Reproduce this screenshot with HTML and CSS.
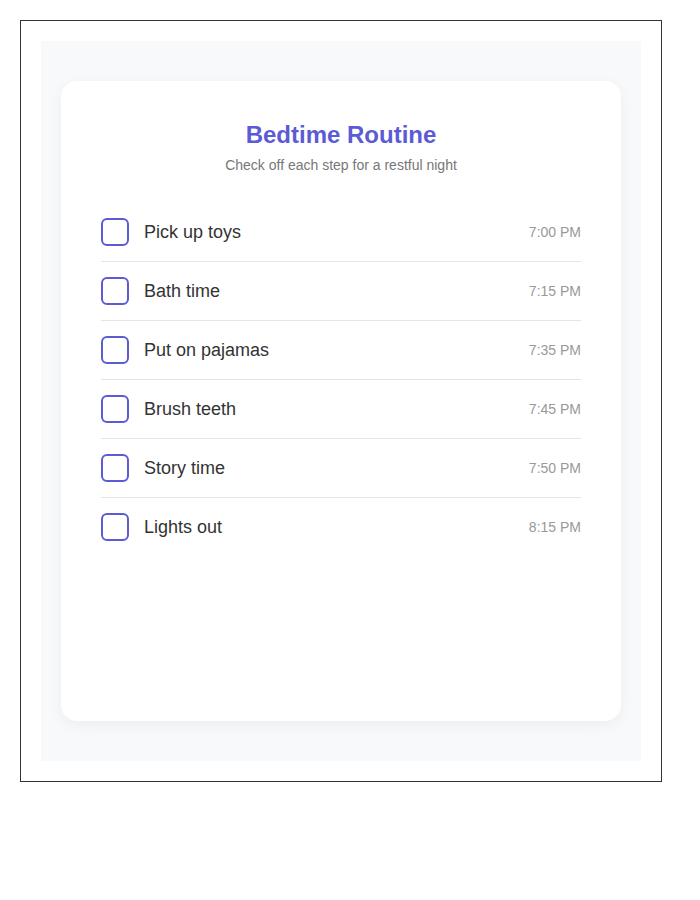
FILE: index.html
```html
<!doctype html>
<html>
    <head>
        <meta charset="utf-8">
        <title>Bedtime Routine</title>
        <link rel="stylesheet" href="styles.css">
    </head>
    <body>
        <div class="frame">
            <div class="backdrop">
                <div class="card">
                    <header class="card-head">
                        <h1>Bedtime Routine</h1>
                        <p>Check off each step for a restful night</p>
                    </header>
                    <ul class="steps">
                        <li class="step">
                            <span class="check"></span>
                            <span class="label">Pick up toys</span>
                            <span class="time">7:00 PM</span>
                        </li>
                        <li class="step">
                            <span class="check"></span>
                            <span class="label">Bath time</span>
                            <span class="time">7:15 PM</span>
                        </li>
                        <li class="step">
                            <span class="check"></span>
                            <span class="label">Put on pajamas</span>
                            <span class="time">7:35 PM</span>
                        </li>
                        <li class="step">
                            <span class="check"></span>
                            <span class="label">Brush teeth</span>
                            <span class="time">7:45 PM</span>
                        </li>
                        <li class="step">
                            <span class="check"></span>
                            <span class="label">Story time</span>
                            <span class="time">7:50 PM</span>
                        </li>
                        <li class="step">
                            <span class="check"></span>
                            <span class="label">Lights out</span>
                            <span class="time">8:15 PM</span>
                        </li>
                    </ul>
                </div>
            </div>
        </div>
    </body>
</html>
```

FILE: styles.css
```css
* {
    box-sizing: border-box;
}

body {
    margin: 20px;
    font-family: "Liberation Sans", Arial, sans-serif;
    background: #fff;
}

.frame {
    width: 642px;
    border: 1px solid #333;
    padding: 20px;
}

.backdrop {
    background: #f7f9fb;
    padding: 40px 20px;
}

.card {
    height: 640px;
    background: #fff;
    border-radius: 16px;
    padding: 40px;
    box-shadow: 0 4px 14px rgba(0, 0, 0, 0.05);
}

.card-head {
    text-align: center;
    margin-bottom: 30px;
}

.card-head h1 {
    margin: 0;
    font-size: 24px;
    font-weight: bold;
    color: #5b5bd6;
}

.card-head p {
    margin: 8px 0 0;
    font-size: 14px;
    color: #777;
}

.steps {
    list-style: none;
    margin: 0;
    padding: 0;
}

.step {
    display: flex;
    align-items: center;
    gap: 15px;
    padding: 15px 0;
    border-bottom: 1px solid #e5e5e5;
}

.step:last-child {
    border-bottom: none;
}

.check {
    width: 28px;
    height: 28px;
    flex: none;
    border: 2px solid #5b5bd6;
    border-radius: 6px;
}

.label {
    flex: 1;
    font-size: 18px;
    color: #333;
}

.time {
    font-size: 14px;
    color: #999;
}
```
